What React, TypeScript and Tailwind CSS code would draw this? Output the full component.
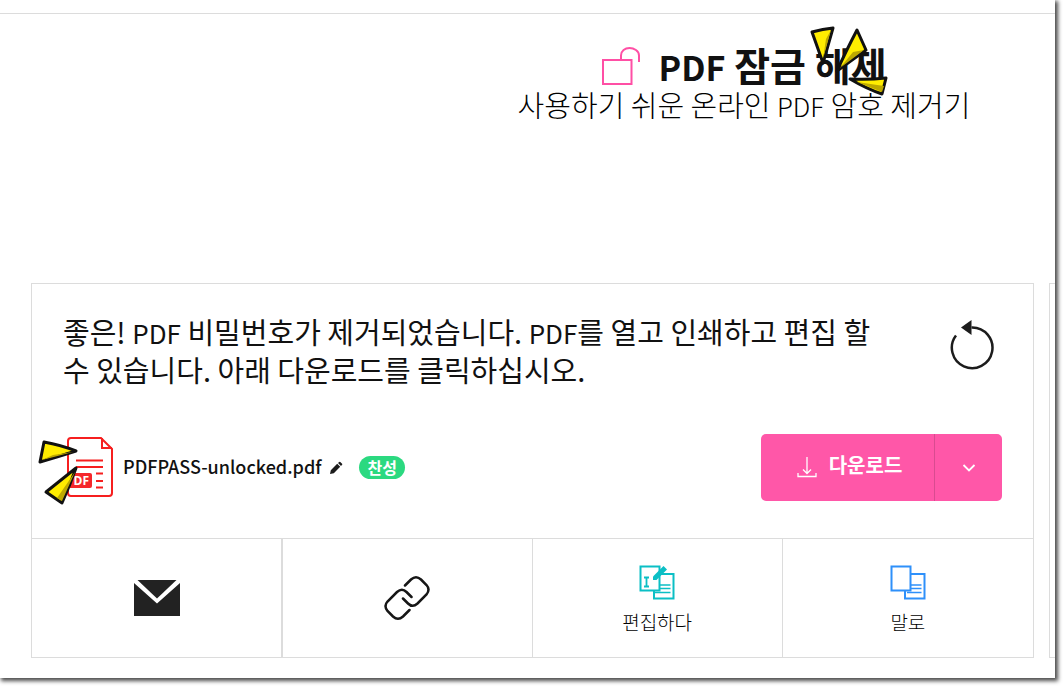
import type { ReactNode } from 'react';

function UnlockIcon() {
  return (
    <svg className="mt-1" width="40" height="40" viewBox="0 0 40 40" fill="none" stroke="#ff4fa5" strokeWidth="2" aria-hidden="true">
      <path d="M2 14h28.500v24H2z" />
      <path d="M20 14V9.500C20 4.800 24 2 28.500 2S38 5 38 9.500V16" />
    </svg>
  );
}

function RestartIcon() {
  return (
    <svg width="46" height="52" viewBox="0 0 46 52" fill="none" aria-hidden="true">
      <path d="M22.500 7.500A20.300 20.300 0 1 1 7 15.500" stroke="#1c1c1c" strokeWidth="2.500" />
      <path d="M12 7.500 22.500 0v15z" fill="#1c1c1c" />
    </svg>
  );
}

function PdfFileIcon() {
  return (
    <svg width="48" height="62" viewBox="0 0 48 62" fill="none" stroke="#f61f1f" aria-hidden="true">
      <path d="M35 1H5a3 3 0 0 0-3 3v52a3 3 0 0 0 3 3h38a3 3 0 0 0 3-3V12z" strokeWidth="2" />
      <path d="M36 1v10h10" strokeWidth="2" />
      <path d="M10 23.500h27M10 30h27M30 36.500h7M30 44h7M30 50.500h7" strokeWidth="2" />
      <rect x="1" y="36" width="25" height="15" rx="2" fill="#f5272b" stroke="none" />
      <text x="0" y="48" fill="#fff" stroke="none" fontSize="12" fontWeight="700" fontFamily="Open Sans, sans-serif">
        PDF
      </text>
    </svg>
  );
}

function PencilIcon() {
  return (
    <svg width="14" height="14" viewBox="0 0 14 14" fill="#1c1c1c" aria-hidden="true">
      <path d="M1 13l.8-3.800L8.200 2.800l3 3L4.800 12.200zM9 2l1.200-1.100a.8.8 0 0 1 1.100 0l1.800 1.800a.8.8 0 0 1 0 1.100L12 5z" />
    </svg>
  );
}

function DownloadIcon() {
  return (
    <svg width="20" height="22" viewBox="0 0 20 22" fill="none" stroke="#fff" strokeWidth="1.300" aria-hidden="true">
      <path d="M10 0v16.500M6 12.500l4 4 4-4M1 16v3.500h18V16" />
    </svg>
  );
}

function ChevronIcon() {
  return (
    <svg width="14" height="8" viewBox="0 0 14 8" fill="none" stroke="#fff" strokeWidth="1.800" aria-hidden="true">
      <path d="M1.500 1 7 6.500 12.500 1" />
    </svg>
  );
}

function MailIcon() {
  return (
    <svg width="46" height="36" viewBox="0 0 46 36" fill="#222" aria-hidden="true">
      <path d="M3.500 0h39L23 18.500z" />
      <path d="M0 3l23 20.500L46 3v33H0z" />
    </svg>
  );
}

function LinkIcon() {
  return (
    <svg width="48" height="48" viewBox="0 0 48 48" fill="none" stroke="#161616" strokeWidth="2.500" strokeLinecap="round" aria-hidden="true">
      <path d="M22 11.500l6-6q5-4.500 10 0l5.500 5.500q4 4.500 0 9.500L34.500 29.500q-5 4.500-9.500 0L20 24.500" />
      <path d="M28.500 23 23.500 18q-4.500-4.500-9.500 0L4.500 27.500q-4 4.500 0 9.500L10 42.500q5 4.500 10 0l6.500-6.500" />
    </svg>
  );
}

function EditIcon() {
  return (
    <svg width="36" height="35" viewBox="0 0 36 35" fill="none" stroke="#0bbfc5" strokeWidth="2" aria-hidden="true">
      <path d="M15 9h19.500v24.500H15z" />
      <path d="M19 20h12.500M19 23.500h12.500M16 27.500h15.500" strokeWidth="1.500" />
      <path d="M1.500 1.500h19v24h-19z" fill="#fff" />
      <path d="M5 12.500h5M7.500 12.500v9M5 21.500h5" strokeWidth="1.800" />
      <path d="M14 15v-3.500L24.500 1l3.500 3.500L17.500 15z" fill="#0bbfc5" stroke="none" />
    </svg>
  );
}

function WordIcon() {
  return (
    <svg width="36" height="35" viewBox="0 0 36 35" fill="none" stroke="#2e90fa" strokeWidth="2" aria-hidden="true">
      <path d="M15 9h19.500v24.500H15z" />
      <path d="M19 20h12.500M19 23.500h12.500M17 27.500h14.500" strokeWidth="1.500" />
      <path d="M1.500 1.500h19v24h-19z" fill="#fff" />
    </svg>
  );
}

// Hand-drawn emphasis marks laid over the title
function TitleMarks() {
  return (
    <svg className="absolute -top-3.5 -right-0.5 max-w-none" width="80" height="72" viewBox="0 0 80 72" strokeLinejoin="round" aria-hidden="true">
      <g fill="#ffed00" stroke="#111" strokeWidth="3">
        <path d="M3 6q11-3 21-4L14 37z" />
        <path d="M48 4l9 20q-14 10-29 21Q36 27 48 4z" />
        <path d="M41 53q18 1 36-1l-4 16q-15-5-32-15z" />
      </g>
      <path d="M22 4 14 33l3-20zM55 24 31 42l13-16zM75 60l-2 6-25-10z" fill="#bda900" />
    </svg>
  );
}

function FileMarks() {
  return (
    <svg className="absolute top-0 -left-[30px] max-w-none" width="44" height="70" viewBox="0 0 44 70" strokeLinejoin="round" aria-hidden="true">
      <g fill="#ffed00" stroke="#111" strokeWidth="3">
        <path d="M8 5q17 3 32 9Q21 20 4 25z" />
        <path d="M40 31q-6 17-14 35L10 55q15-12 30-24z" />
      </g>
      <path d="M6 23l31-8-20 3zM39 35 26 64l-5-3z" fill="#bda900" />
    </svg>
  );
}

function ActionCell({ label, icon, className, children }: { label: string; icon: ReactNode; className: string; children?: ReactNode }) {
  return (
    <button type="button" aria-label={label} className={`flex flex-col items-center justify-center gap-2 border-[#dcdcdc] ${className}`}>
      {icon}
      {children}
    </button>
  );
}

export default function App() {
  return (
    <div className="flex min-h-screen overflow-hidden bg-white pr-2 pb-2 font-['Noto_Sans_CJK_KR',sans-serif] text-[#111]">
      <div className="flex-1 bg-white shadow-[2px_2px_4px_1px_rgba(0,0,0,0.7)]">
        <header className="mt-[13px] flex h-[270px] flex-col items-center border-t border-[#dcdcdc] pt-[26px] pl-[433px]">
          <div className="flex items-center gap-[17px]">
            <UnlockIcon />
            <h1 className="relative text-[39px] leading-[48px] font-bold whitespace-nowrap">
              <span className="text-[34px] leading-none">PDF</span> 잠금 해제
              <TitleMarks />
            </h1>
          </div>
          <p className="text-[29px] leading-8 font-light whitespace-nowrap text-black">
            사용하기 쉬운 온라인 <span className="text-[26px] leading-none">PDF</span> 암호 제거기
          </p>
        </header>

        <div className="flex gap-[15px] pl-[31px]">
          <main className="min-w-0 flex-1 border border-[#dcdcdc]">
            <section className="flex items-start justify-between pt-7 pr-[38px] pl-[31px]">
              <p className="max-w-[830px] text-[29px] leading-[38px] break-keep">
                좋은! <span className="text-[26px] leading-none">PDF</span> 비밀번호가 제거되었습니다.{' '}
                <span className="text-[26px] leading-none">PDF</span>를 열고 인쇄하고 편집 할 수 있습니다. 아래 다운로드를 클릭하십시오.
              </p>
              <button type="button" aria-label="다시 시작" className="mt-2">
                <RestartIcon />
              </button>
            </section>

            <section className="mt-[46px] flex items-center justify-between pr-[31px] pb-[37px] pl-[34px]">
              <div className="flex items-center">
                <div className="relative">
                  <PdfFileIcon />
                  <FileMarks />
                </div>
                <span className="ml-[9px] pb-1 text-[18px] leading-6 font-medium">PDFPASS-unlocked.pdf</span>
                <button type="button" aria-label="이름 바꾸기" className="ml-2">
                  <PencilIcon />
                </button>
                <span className="ml-4 rounded-full bg-[#2bd980] px-2 text-[16px] leading-[23px] font-bold text-white">찬성</span>
              </div>
              <div className="flex h-[67px] overflow-hidden rounded-[5px] bg-[#ff57a8] text-white">
                <button type="button" className="flex w-[173px] items-center justify-center gap-3 pl-1 text-[20px] leading-6 font-bold">
                  <DownloadIcon />
                  <span className="pb-1.5">다운로드</span>
                </button>
                <button type="button" aria-label="다운로드 옵션" className="flex w-[68px] items-center justify-center border-l border-[#d94b90]">
                  <ChevronIcon />
                </button>
              </div>
            </section>

            <section className="grid h-[119px] grid-cols-4 border-t border-[#dcdcdc]">
              <ActionCell label="이메일" icon={<MailIcon />} className="border-r" />
              <ActionCell label="링크" icon={<LinkIcon />} className="border-x" />
              <ActionCell label="편집하다" icon={<EditIcon />} className="border-r pt-1">
                <span className="text-[19px] leading-7 font-light text-black">편집하다</span>
              </ActionCell>
              <ActionCell label="말로" icon={<WordIcon />} className="pt-1">
                <span className="text-[19px] leading-7 font-light text-black">말로</span>
              </ActionCell>
            </section>
          </main>
          <aside className="w-[6px] border-y border-l border-[#dcdcdc]" />
        </div>
      </div>
    </div>
  );
}
